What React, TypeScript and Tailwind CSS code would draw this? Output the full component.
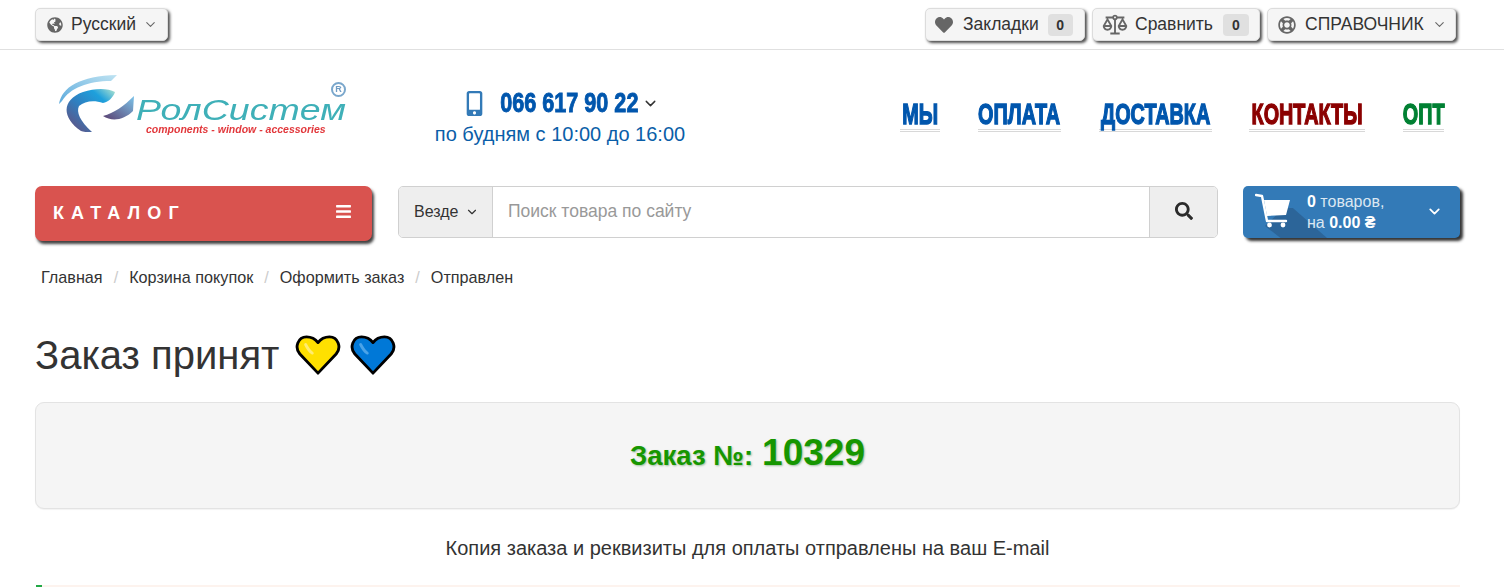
import { ChevronDown } from "lucide-react";
import { FaGlobeAmericas, FaHeart, FaRegLifeRing, FaMobileAlt, FaSearch, FaBars } from "react-icons/fa";
import { LiaBalanceScaleSolid } from "react-icons/lia";

const btn = "flex items-center h-[33px] bg-[#f5f5f5] border border-[#dcdcdc] rounded-[5px] shadow-[2px_2px_3px_rgba(0,0,0,0.7)] text-[#333] text-[17.5px]";

function Heart({ fill, shine }: { fill: string; shine: string }) {
  return (
    <svg width="46" height="42" viewBox="0 0 48 44" className="block">
      <path d="M24 41 L5 21 C-1 14 3 3 12 3 C17 3 21 5 24 9 C27 5 31 3 36 3 C45 3 49 14 43 21 Z" fill={fill} stroke="#000" strokeWidth="3" strokeLinejoin="round" />
      <path d="M11 11 C13 15 15 18 18 20" fill="none" stroke={shine} strokeWidth="3" strokeLinecap="round" />
    </svg>
  );
}

function Logo() {
  return (
    <div className="relative w-[290px] h-[66px] blur-[0.4px]">
      <svg width="100" height="60" viewBox="0 0 100 60" className="absolute left-0 top-0">
        <defs>
          <linearGradient id="a" x1="0" y1="1" x2="1" y2="0">
            <stop offset="0" stopColor="#5aa9dc" />
            <stop offset="1" stopColor="#bfe3f2" />
          </linearGradient>
          <linearGradient id="b" x1="0" y1="1" x2="1" y2="0">
            <stop offset="0" stopColor="#6a4a78" />
            <stop offset="0.45" stopColor="#2f7fc0" />
            <stop offset="0.75" stopColor="#1ea0dc" />
            <stop offset="1" stopColor="#b5e5cf" />
          </linearGradient>
          <linearGradient id="c" x1="0" y1="1" x2="1" y2="0">
            <stop offset="0" stopColor="#5a3f70" />
            <stop offset="1" stopColor="#7cc4ea" />
          </linearGradient>
        </defs>
        <path d="M1 31 C4 14 22 3 59 2 L53 8 C30 8 12 15 4 28 Z" fill="url(#a)" />
        <path d="M23 58 C4 45 3 27 25 19 C37 15 50 15 57 19 C55 25 50 29 45 30 C36 27 27 28 21 33 C18 39 22 48 34 59 C29 59 25 59 23 58 Z" fill="url(#b)" />
        <path d="M45 43 C56 40 66 33 76 23 L75 38 C66 47 54 49 45 43 Z" fill="url(#c)" />
      </svg>
      <span className="absolute left-[78px] top-[19px] text-[30px] leading-[36px] italic text-[#3fb0b8] origin-left scale-x-[1.25] whitespace-nowrap">РолСистем</span>
      <span className="absolute left-[88px] top-[49px] text-[10.5px] leading-[14px] font-bold italic text-[#e2383c] whitespace-nowrap">components - window - accessories</span>
      <span className="absolute left-[273px] top-[9px] w-[15px] h-[15px] rounded-full border-2 border-[#7aa7cc] text-[#6f9cc4] text-[9px] leading-[11px] text-center font-bold">R</span>
    </div>
  );
}

function NavLink({ label, color, width }: { label: string; color: string; width: string }) {
  return (
    <span className={`${width} flex justify-center h-[34px] border-b-[3px] border-double border-[#d8d8d8]`} style={{ color }}>
      <span className="leading-[32px] text-[30px] font-bold whitespace-nowrap scale-x-[0.66] [-webkit-text-stroke:1.4px_currentColor]">
        {label}
      </span>
    </span>
  );
}

function CartIcon() {
  return (
    <svg width="36" height="36" viewBox="0 0 36 36" className="relative ml-[12px] -mt-[3px]">
      <path d="M9 7 L35 7 L31 22 L12 23 Z" fill="#fff" />
      <path d="M1 2 L7 3 L12 28 L31 28" fill="none" stroke="#fff" strokeWidth="2.4" strokeLinecap="round" strokeLinejoin="round" />
      <circle cx="14.5" cy="32" r="2.4" fill="#fff" />
      <circle cx="28" cy="32" r="2.4" fill="#fff" />
    </svg>
  );
}

export default function App() {
  return (
    <div className="w-full h-[587px] overflow-hidden bg-white [font-family:'Liberation_Sans',Arial,sans-serif] text-[#333]">
      {/* top bar */}
      <div className="h-[50px] border-b border-[#e0e0e0] px-[35px] pr-[48px] pt-[8px] flex justify-between">
        <div className={`${btn} w-[133px] pl-[11px]`}>
          <FaGlobeAmericas className="text-[16px] text-[#666]" />
          <span className="ml-[8px]">Русский</span>
          <ChevronDown className="ml-[7px] w-[15px] h-[15px] text-[#666]" strokeWidth={1.7} />
        </div>
        <div className="flex gap-[7px]">
          <div className={`${btn} w-[160px] pl-[9px]`}>
            <FaHeart className="text-[18px] text-[#666]" />
            <span className="ml-[10px]">Закладки</span>
            <span className="ml-[9px] w-[25px] h-[22px] rounded-[4px] bg-[#e0e0e0] text-[14px] font-bold text-center leading-[22px]">0</span>
          </div>
          <div className={`${btn} w-[168px] pl-[7px]`}>
            <LiaBalanceScaleSolid className="text-[30px] text-[#666]" />
            <span className="ml-[5px]">Сравнить</span>
            <span className="ml-[10px] w-[26px] h-[22px] rounded-[4px] bg-[#e0e0e0] text-[14px] font-bold text-center leading-[22px]">0</span>
          </div>
          <div className={`${btn} w-[189px] pl-[10px]`}>
            <FaRegLifeRing className="text-[18px] text-[#666]" />
            <span className="ml-[9px]">СПРАВОЧНИК</span>
            <ChevronDown className="ml-[8px] w-[15px] h-[15px] text-[#666]" strokeWidth={1.7} />
          </div>
        </div>
      </div>

      {/* header */}
      <div className="h-[136px] pl-[58px] pr-[60px] flex">
        <div className="pt-[23px]"><Logo /></div>
        <div className="ml-[87px] w-[250px] pt-[38px] flex flex-col items-center">
          <div className="flex items-center h-[30px] text-[#0056ad]">
            <FaMobileAlt className="text-[25px] text-[#337ab7]" />
            <span className="ml-[13px] w-[139px] flex justify-center">
              <span className="text-[27px] font-bold whitespace-nowrap scale-x-[0.8] [-webkit-text-stroke:0.9px_currentColor]">066 617 90 22</span>
            </span>
            <ChevronDown className="ml-[3px] w-[17px] h-[17px] text-[#333]" strokeWidth={2} />
          </div>
          <div className="mt-[1px] text-[20px] leading-[30px] text-[#0a5ea8] whitespace-nowrap">по будням с 10:00 до 16:00</div>
        </div>
        <div className="ml-auto pt-[48px] flex gap-[38px]">
          <NavLink label="МЫ" color="#0056ad" width="w-[40px]" />
          <NavLink label="ОПЛАТА" color="#0056ad" width="w-[83px]" />
          <NavLink label="ДОСТАВКА" color="#0056ad" width="w-[113px]" />
          <span className="-ml-px flex">
            <NavLink label="КОНТАКТЫ" color="#8b0000" width="w-[116px]" />
          </span>
          <NavLink label="ОПТ" color="#008033" width="w-[41px]" />
        </div>
      </div>

      {/* catalog / search / cart */}
      <div className="px-[35px] pr-[44px] flex items-start">
        <div className="w-[337px] h-[55px] pl-[18px] pr-[20px] flex items-center justify-between rounded-[7px] bg-[#d9534f] text-white shadow-[2px_3px_3px_rgba(0,0,0,0.75)]">
          <span className="text-[18px] font-bold tracking-[7.1px] -mt-[1px]">КАТАЛОГ</span>
          <FaBars className="text-[17px] -mt-[5px]" />
        </div>
        <div className="ml-[26px] w-[820px] h-[52px] flex border border-[#d0d0d0] rounded-[5px] overflow-hidden">
          <div className="w-[94px] flex items-center pl-[15px] bg-[#eeeeee] border-r border-[#d0d0d0] text-[16px]">
            Везде
            <ChevronDown className="ml-[7px] w-[14px] h-[14px]" strokeWidth={2} />
          </div>
          <div className="flex-1 flex items-center pl-[15px] bg-white text-[17.5px] text-[#999] -mt-[1px]">Поиск товара по сайту</div>
          <div className="w-[68px] flex items-center justify-center bg-[#eeeeee] border-l border-[#d0d0d0]">
            <FaSearch className="text-[18px] text-[#2b2b2b] -mt-[2px]" />
          </div>
        </div>
        <div className="relative ml-[25px] w-[217px] h-[52px] flex items-center rounded-[5px] bg-[#337ab7] text-white shadow-[3px_3px_3px_rgba(0,0,0,0.8)]">
          <div className="absolute left-[22px] top-[22px] w-[62px] h-[30px] bg-[#2c6599] [clip-path:polygon(0_60%,30%_0,45%_0,100%_100%,25%_100%)]" />
          <CartIcon />
          <div className="relative ml-[16px] text-[16px] leading-[21px] text-[#dbe7f2]">
            <div><b className="text-white">0</b> товаров,</div>
            <div>на <b className="text-white">0.00 ₴</b></div>
          </div>
          <ChevronDown className="absolute right-[17px] top-[17px] w-[17px] h-[17px]" strokeWidth={2.5} />
        </div>
      </div>

      {/* breadcrumb */}
      <div className="mt-[25px] pl-[41px] flex text-[16.2px] leading-[22px] text-[#333]">
        <span>Главная</span><span className="px-[11px] text-[#ccc]">/</span>
        <span>Корзина покупок</span><span className="px-[11px] text-[#ccc]">/</span>
        <span>Оформить заказ</span><span className="px-[11px] text-[#ccc]">/</span>
        <span>Отправлен</span>
      </div>

      {/* title */}
      <div className="mt-[42px] pl-[35px] flex items-center h-[50px]">
        <h1 className="text-[40px] leading-[50px] text-[#333] font-normal">Заказ принят</h1>
        <div className="ml-[16px] flex gap-[9px]">
          <Heart fill="#ffe000" shine="#ffec70" />
          <Heart fill="#0078d7" shine="#4aa3e8" />
        </div>
      </div>

      {/* order box */}
      <div className="mx-[35px] w-[1425px] mt-[22px] h-[107px] flex items-center justify-center border border-[#e3e3e3] rounded-[9px] bg-[#f5f5f5] shadow-[0_1px_1px_rgba(0,0,0,0.05)] font-bold text-[#169600] [text-shadow:1px_1px_2px_rgba(0,90,0,0.35)]">
        <span className="text-[27.5px] leading-[40px]">Заказ №:</span>
        <span className="ml-[9px] text-[37px] leading-[40px] -mt-[6px]">10329</span>
      </div>

      <div className="w-[1425px] mx-[35px] mt-[26px] text-center text-[20px] leading-[26px] text-[#333]">
        Копия заказа и реквизиты для оплаты отправлены на ваш E-mail
      </div>

      {/* start of next block */}
      <div className="mx-[36px] w-[1424px] mt-[24px] h-[2px] flex bg-[#fdf3ee]">
        <div className="w-[6px] bg-[#22a846]" />
      </div>
    </div>
  );
}
